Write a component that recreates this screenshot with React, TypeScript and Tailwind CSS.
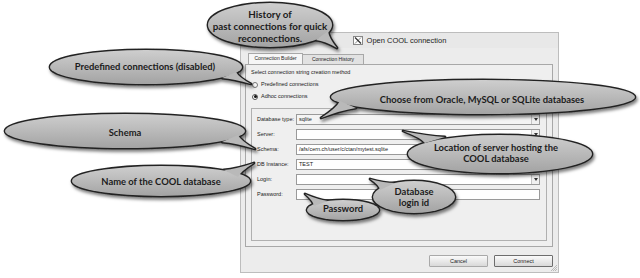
import React from "react";

type Pt = [number, number];
type B = { cx: number; cy: number; rx: number; ry: number; t: [Pt, Pt, Pt] };

const balloons: B[] = [
  { cx: 270, cy: 25, rx: 62, ry: 22, t: [[316, 40], [337, 48], [328, 31]] },
  { cx: 146, cy: 67, rx: 96, ry: 17, t: [[222, 78], [251, 84], [236, 72]] },
  { cx: 483, cy: 97, rx: 152, ry: 17, t: [[340, 101], [321, 118], [356, 108]] },
  { cx: 125, cy: 131, rx: 120, ry: 17, t: [[222, 142], [255, 149], [238, 135]] },
  { cx: 161, cy: 181, rx: 89, ry: 15, t: [[224, 170], [254, 163], [238, 177]] },
  { cx: 500, cy: 154, rx: 92, ry: 19, t: [[425, 143], [403, 131], [445, 137]] },
  { cx: 414, cy: 197, rx: 41, ry: 16, t: [[380, 190], [370, 179], [395, 183]] },
  { cx: 343, cy: 210, rx: 36, ry: 10, t: [[314, 206], [305, 194], [328, 201]] },
];

function tail(t: [Pt, Pt, Pt]) {
  const [b1, tip, b2] = t;
  const bm: Pt = [(b1[0] + b2[0]) / 2, (b1[1] + b2[1]) / 2];
  const m1: Pt = [(b1[0] + tip[0]) / 2, (b1[1] + tip[1]) / 2];
  const m2: Pt = [(b2[0] + tip[0]) / 2, (b2[1] + tip[1]) / 2];
  const c1: Pt = [m1[0] + (bm[0] - m1[0]) * 0.35, m1[1] + (bm[1] - m1[1]) * 0.35];
  const c2: Pt = [m2[0] + (bm[0] - m2[0]) * 0.35, m2[1] + (bm[1] - m2[1]) * 0.35];
  return `M${b1[0]},${b1[1]} Q${c1[0]},${c1[1]} ${tip[0]},${tip[1]} Q${c2[0]},${c2[1]} ${b2[0]},${b2[1]} Z`;
}

function Combo({ value, gray }: { value?: string; gray?: boolean }) {
  return (
    <div className={`flex h-[11px] w-[244px] border border-[#9a9a9a] ${gray ? "bg-[#f4f4f4]" : "bg-white"}`}>
      <div className="flex-1 pl-[2px] text-[5.5px] leading-[9px] text-[#222]">{value}</div>
      <div className="flex w-[8px] items-center justify-center border-l border-[#c4c4c4] bg-[#f0f0f0]">
        <svg width="4" height="3" viewBox="0 0 4 3">
          <path d="M0 0 L4 0 L2 3 Z" fill="#333" />
        </svg>
      </div>
    </div>
  );
}

function Field({ value }: { value?: string }) {
  return (
    <div className="h-[11px] w-[244px] border border-[#9a9a9a] bg-white pl-[2px] text-[5.5px] leading-[9px] text-[#222]">
      {value}
    </div>
  );
}

function Row({ label, children }: { label: string; children: React.ReactNode }) {
  return (
    <div className="flex h-[11px] items-center">
      <div className="w-[39px] text-[5.5px] text-[#222]">{label}</div>
      {children}
    </div>
  );
}

export default function App() {
  return (
    <div className="relative h-[278px] w-[640px] overflow-hidden bg-white pl-[240px] pt-[32px] font-['Liberation_Sans',sans-serif]">
      {/* Dialog */}
      <div className="relative flex h-[241px] w-[319px] flex-col border border-[#bdbdbd] bg-[#ececec]">
        <div className="flex h-[15px] items-center justify-center gap-[4px] bg-[#e8e8e8]">
          <svg width="10" height="9" viewBox="0 0 10 9">
            <rect x="0.5" y="0.5" width="9" height="8" fill="#fff" stroke="#888" />
            <path d="M2 1.5 L8 7.5" stroke="#333" strokeWidth="1.3" />
            <path d="M8 1.5 L2 7.5" stroke="#333" strokeWidth="0.6" />
          </svg>
          <span className="text-[7.5px] text-[#222]">Open COOL connection</span>
        </div>
        <div className="flex pl-[7px] pt-[5px]">
          <div className="flex h-[11px] w-[55px] items-center justify-center border border-b-0 border-[#a8a8a8] bg-[#f6f6f6] text-[5px] text-[#222]">
            Connection Builder
          </div>
          <div className="mt-[1px] flex h-[10px] w-[61px] items-center justify-center border border-b-0 border-l-0 border-[#a8a8a8] bg-[#e2e2e2] text-[5px] text-[#222]">
            Connection History
          </div>
        </div>
        <div className="ml-[4px] flex h-[183px] w-[308px] flex-col border border-[#a8a8a8] bg-[#efefef]">
          <div className="pl-[5px] pt-[4px] text-[5.5px] leading-[6px] text-[#222]">
            Select connection string creation method
          </div>
          <div className="mt-[6px] flex h-[7px] items-center gap-[3px] pl-[6px]">
            <div className="h-[6px] w-[6px] rounded-full border border-[#777] bg-white" />
            <span className="text-[5.5px] leading-[7px] text-[#222]">Predefined connections</span>
          </div>
          <div className="mt-[5px] flex h-[7px] items-center gap-[3px] pl-[6px]">
            <div className="flex h-[6px] w-[6px] items-center justify-center rounded-full border border-[#555] bg-white">
              <div className="h-[3px] w-[3px] rounded-full bg-[#111]" />
            </div>
            <span className="text-[5.5px] leading-[7px] text-[#222]">Adhoc connections</span>
          </div>
          <div className="ml-[5px] mt-[8px] flex h-[133px] w-[296px] flex-col gap-[4px] border border-[#b0b0b0] pl-[5px] pt-[5px]">
            <Row label="Database type:">
              <Combo value="sqlite" gray />
            </Row>
            <Row label="Server:">
              <Combo />
            </Row>
            <Row label="Schema:">
              <Field value="/afs/cern.ch/user/c/ctan/mytest.sqlite" />
            </Row>
            <Row label="DB Instance:">
              <Combo value="TEST" />
            </Row>
            <Row label="Login:">
              <Combo />
            </Row>
            <Row label="Password:">
              <Field />
            </Row>
          </div>
        </div>
        <div className="mt-[8px] flex justify-end gap-[6px] pr-[5px]">
          <div className="flex h-[12px] w-[59px] items-center justify-center rounded-[1px] border border-[#a9a9a9] bg-gradient-to-b from-[#fafafa] to-[#d9d9d9] text-[5.5px] text-[#222]">
            Cancel
          </div>
          <div className="flex h-[12px] w-[59px] items-center justify-center rounded-[1px] border border-[#6d6d6d] bg-gradient-to-b from-[#fafafa] to-[#d9d9d9] text-[5.5px] text-[#222]">
            Connect
          </div>
        </div>
        <svg className="absolute bottom-[1px] right-[1px]" width="6" height="6" viewBox="0 0 6 6">
          <path d="M6 0 L0 6 M6 2 L2 6 M6 4 L4 6" stroke="#999" strokeWidth="0.6" />
        </svg>
      </div>

      {/* Callout balloons */}
      <svg className="absolute left-0 top-0" width="640" height="278" viewBox="0 0 640 278">
        <defs>
          <linearGradient id="bf" x1="0" y1="0" x2="0" y2="1">
            <stop offset="0" stopColor="#cecece" />
            <stop offset="0.5" stopColor="#b9b9b9" />
            <stop offset="1" stopColor="#a3a3a3" />
          </linearGradient>
          <filter id="sh" x="-10%" y="-30%" width="120%" height="170%">
            <feDropShadow dx="1.5" dy="2.5" stdDeviation="1.4" floodColor="#000" floodOpacity="0.5" />
          </filter>
        </defs>
        {balloons.map((b, i) => (
          <g key={i} filter="url(#sh)">
            <ellipse cx={b.cx} cy={b.cy} rx={b.rx} ry={b.ry} fill="#222" stroke="#222" strokeWidth="2.8" />
            <path d={tail(b.t)} fill="#222" stroke="#222" strokeWidth="2.8" strokeLinejoin="round" />
            <ellipse cx={b.cx} cy={b.cy} rx={b.rx} ry={b.ry} fill="url(#bf)" />
            <path d={tail(b.t)} fill="#b9b9b9" />
          </g>
        ))}
      </svg>

      <div className="absolute inset-0 font-['Lato',sans-serif] text-[9.4px] font-bold leading-[12px] text-[#1c1c1c]">
        <div className="absolute left-[170px] top-[6px] flex h-[40px] w-[200px] items-center justify-center whitespace-nowrap text-center text-[9.8px]">
          History of
          <br />
          past connections for quick
          <br />
          reconnections.
        </div>
        <div className="absolute left-[45px] top-[47px] flex h-[40px] w-[200px] items-center justify-center whitespace-nowrap">
          Predefined connections (disabled)
        </div>
        <div className="absolute left-[332px] top-[80px] flex h-[40px] w-[300px] items-center justify-center whitespace-nowrap">
          Choose from Oracle, MySQL or SQLite databases
        </div>
        <div className="absolute left-[25px] top-[113px] flex h-[40px] w-[200px] items-center justify-center whitespace-nowrap">
          Schema
        </div>
        <div className="absolute left-[61px] top-[162px] flex h-[40px] w-[200px] items-center justify-center whitespace-nowrap">
          Name of the COOL database
        </div>
        <div className="absolute left-[396px] top-[133px] flex h-[40px] w-[200px] items-center justify-center whitespace-nowrap text-center leading-[11px]">
          Location of server hosting the
          <br />
          COOL database
        </div>
        <div className="absolute left-[314px] top-[177px] flex h-[40px] w-[200px] items-center justify-center whitespace-nowrap text-center leading-[11px]">
          Database
          <br />
          login id
        </div>
        <div className="absolute left-[243px] top-[189px] flex h-[40px] w-[200px] items-center justify-center whitespace-nowrap">
          Password
        </div>
      </div>
    </div>
  );
}
